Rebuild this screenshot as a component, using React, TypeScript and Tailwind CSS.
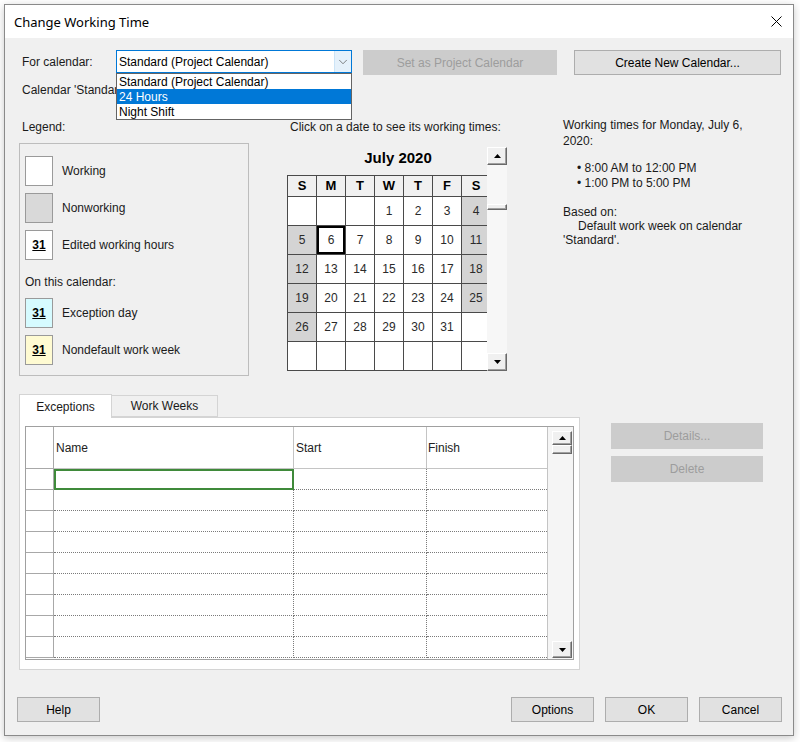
import { ChevronDown } from "lucide-react";

const weeks: string[][] = [
  ["", "", "", "1", "2", "3", "4"],
  ["5", "6", "7", "8", "9", "10", "11"],
  ["12", "13", "14", "15", "16", "17", "18"],
  ["19", "20", "21", "22", "23", "24", "25"],
  ["26", "27", "28", "29", "30", "31", ""],
  ["", "", "", "", "", "", ""],
];

const dayNames = ["S", "M", "T", "W", "T", "F", "S"];

function Arrow({ up }: { up?: boolean }) {
  return (
    <svg width="7" height="4" viewBox="0 0 7 4">
      <path d={up ? "M0 4L3.5 0L7 4Z" : "M0 0L3.5 4L7 0Z"} fill="#000" />
    </svg>
  );
}

function ScrollBtn({ up, className = "" }: { up?: boolean; className?: string }) {
  return (
    <div
      className={`flex items-center justify-center bg-[#f0f0f0] border border-t-white border-l-white border-r-[#696969] border-b-[#696969] shadow-[inset_-1px_-1px_0_#a0a0a0] ${className}`}
    >
      <Arrow up={up} />
    </div>
  );
}

function Thumb({ className = "" }: { className?: string }) {
  return (
    <div
      className={`bg-[#f0f0f0] border border-t-white border-l-white border-r-[#696969] border-b-[#696969] shadow-[inset_-1px_-1px_0_#a0a0a0] ${className}`}
    />
  );
}

function Button({
  children,
  className = "",
  disabled = false,
}: {
  children: React.ReactNode;
  className?: string;
  disabled?: boolean;
}) {
  return (
    <button
      type="button"
      className={`flex items-center justify-center border ${
        disabled
          ? "bg-[#cccccc] border-[#cccccc] text-[#9d9d9d]"
          : "bg-[#e1e1e1] border-[#adadad] text-black"
      } ${className}`}
    >
      {children}
    </button>
  );
}

function LegendItem({ bg, mark, label }: { bg: string; mark?: boolean; label: string }) {
  return (
    <div className="flex items-center">
      <div className={`w-[28px] h-[30px] border border-[#9a9a9a] flex items-center justify-center ${bg}`}>
        {mark && <span className="font-bold underline text-[12px] text-black">31</span>}
      </div>
      <span className="ml-[9px] text-[#1a1a1a]">{label}</span>
    </div>
  );
}

function Calendar() {
  return (
    <div className="flex">
      <div className="w-[200px]">
        <div className="h-[28px] pl-[22px] pt-[2px] text-center font-bold text-[15px] leading-[18px]">
          July 2020
        </div>
        <div className="w-[200px] overflow-hidden">
          <div className="w-[204px] border-t border-l border-[#4a4a4a]">
            <div className="flex">
              {dayNames.map((d, i) => (
                <div
                  key={i}
                  className="w-[29px] h-[21px] shrink-0 border-r border-b border-[#4a4a4a] bg-[#f0f0f0] flex items-center justify-center font-bold text-[13px]"
                >
                  {d}
                </div>
              ))}
            </div>
            {weeks.map((week, r) => (
              <div key={r} className="flex">
                {week.map((d, c) => {
                  const off = d !== "" && (c === 0 || c === 6);
                  const sel = d === "6";
                  return (
                    <div
                      key={c}
                      className={`w-[29px] h-[29px] shrink-0 border-r border-b border-[#4a4a4a] flex items-center justify-center text-[#2a2a2a] ${
                        off ? "bg-[#d4d4d4]" : "bg-white"
                      } ${sel ? "shadow-[inset_0_0_0_2px_#000]" : ""}`}
                    >
                      {d}
                    </div>
                  );
                })}
              </div>
            ))}
          </div>
        </div>
      </div>
      <div className="w-[20px] h-[224px] flex flex-col bg-[#f7f7f7]">
        <ScrollBtn up className="h-[18px]" />
        <div className="h-[39px]" />
        <Thumb className="h-[6px]" />
        <div className="flex-1" />
        <ScrollBtn className="h-[18px]" />
      </div>
    </div>
  );
}

function ExceptionsTable() {
  const rows = Array.from({ length: 9 });
  return (
    <div className="w-[549px] h-[234px] border border-[#a0a0a0] flex bg-white">
      <div className="w-[521px] flex flex-col">
        <div className="flex h-[42px] shrink-0">
          <div className="w-[28px] border-r border-b border-[#a8a8a8]" />
          <div className="w-[240px] border-r border-b border-[#c4c4c4] flex items-center pl-[2px] text-[#222]">
            Name
          </div>
          <div className="w-[133px] border-r border-b border-[#c4c4c4] flex items-center pl-[2px] text-[#222]">
            Start
          </div>
          <div className="w-[120px] border-b border-[#c4c4c4] flex items-center pl-[1px] text-[#222]">
            Finish
          </div>
        </div>
        {rows.map((_, i) => (
          <div key={i} className="flex h-[21px] shrink-0">
            <div className="w-[28px] border-r border-b border-[#a8a8a8]" />
            {i === 0 ? (
              <div className="w-[240px] border-2 border-[#3f8a3a]" />
            ) : (
              <div className="w-[240px] border-r border-b border-dotted border-[#7a7a7a]" />
            )}
            <div className="w-[133px] border-r border-b border-dotted border-[#7a7a7a]" />
            <div className="w-[120px] border-b border-dotted border-[#7a7a7a]" />
          </div>
        ))}
      </div>
      <div className="w-[26px] border-l border-[#c4c4c4] bg-[#f5f5f5] flex flex-col pt-[4px] pl-[4px] pb-[1px]">
        <ScrollBtn up className="w-[20px] h-[14px]" />
        <Thumb className="w-[20px] h-[9px]" />
        <div className="flex-1" />
        <ScrollBtn className="w-[20px] h-[17px]" />
      </div>
    </div>
  );
}

export default function App() {
  return (
    <div className="w-[800px] h-[742px] bg-white pt-[4px] pl-[4px] font-['Liberation_Sans',Arial,sans-serif] text-[12px] leading-[14px] text-black">
      <div className="w-[790px] h-[732px] border border-[#8a8a8a] flex flex-col shadow-[0_2px_8px_rgba(0,0,0,0.22)]">
        {/* Title bar */}
        <div className="h-[33px] shrink-0 bg-white flex items-center justify-between">
          <span className="pl-[9px] font-['Noto_Sans',sans-serif] text-[13px]">Change Working Time</span>
          <div className="w-[34px] h-full flex items-center justify-center">
            <svg width="11" height="11" viewBox="0 0 11 11">
              <path d="M0.5 0.5L10.5 10.5M10.5 0.5L0.5 10.5" stroke="#000" strokeWidth="1" />
            </svg>
          </div>
        </div>

        {/* Body */}
        <div className="flex-1 bg-[#f0f0f0] pl-[14px] pr-[11px] flex flex-col">
          <div className="mt-[12px] h-[25px] flex items-start">
            <div className="w-[97px] pl-[3px] h-[23px] flex items-center text-[#1a1a1a]">For calendar:</div>
            <div className="relative w-[236px] h-[23px] border border-[#0078d7] bg-white flex z-20">
              <div className="flex-1 pl-[2px] flex items-center">Standard (Project Calendar)</div>
              <div className="w-[17px] bg-[#e5f1fb] border-l border-[#cce4f7] flex items-center justify-center">
                <ChevronDown size={14} strokeWidth={1.25} color="#555" />
              </div>
              <div className="absolute left-[-1px] top-[22px] w-[236px] border border-[#646464] bg-white">
                <div className="h-[15px] pl-[2px] flex items-center">Standard (Project Calendar)</div>
                <div className="h-[15px] pl-[2px] flex items-center bg-[#0078d7] text-white">24 Hours</div>
                <div className="h-[15px] pl-[2px] flex items-center">Night Shift</div>
              </div>
            </div>
            <Button disabled className="ml-[11px] w-[194px] h-[25px]">
              Set as Project Calendar
            </Button>
            <Button className="ml-[17px] w-[207px] h-[25px]">Create New Calendar...</Button>
          </div>

          {/* label runs under the open list, so only its visible part is kept */}
          <div className="mt-[8px] h-[14px] w-[97px] pl-[3px] overflow-hidden whitespace-nowrap text-[#1a1a1a]">
            Calendar 'Standard' is a base calendar.
          </div>

          {/* Legend / calendar / working times */}
          <div className="mt-[23px] flex items-start">
            <div className="w-[230px]">
              <div className="h-[14px] pl-[3px] text-[#1a1a1a]">Legend:</div>
              <div className="mt-[9px] h-[233px] border border-[#bdbdbd] pl-[5px] pt-[12px]">
                <div className="flex flex-col gap-[7px]">
                  <LegendItem bg="bg-white" label="Working" />
                  <LegendItem bg="bg-[#d9d9d9]" label="Nonworking" />
                  <LegendItem bg="bg-white" mark label="Edited working hours" />
                </div>
                <div className="mt-[15px] h-[14px] text-[#1a1a1a]">On this calendar:</div>
                <div className="mt-[9px] flex flex-col gap-[7px]">
                  <LegendItem bg="bg-[#d6fbff]" mark label="Exception day" />
                  <LegendItem bg="bg-[#fffbd2]" mark label="Nondefault work week" />
                </div>
              </div>
            </div>

            <div className="ml-[38px] w-[220px]">
              <div className="h-[14px] pl-[3px] whitespace-nowrap text-[#1a1a1a]">
                Click on a date to see its working times:
              </div>
              <div className="mt-[13px]">
                <Calendar />
              </div>
            </div>

            <div className="ml-[56px] mt-[-3px] w-[210px] text-[#1a1a1a] leading-[16px]">
              <div>Working times for Monday, July 6,</div>
              <div>2020:</div>
              <div className="mt-[12px] pl-[14px] leading-[15px]">• 8:00 AM to 12:00 PM</div>
              <div className="pl-[14px] leading-[15px]">• 1:00 PM to 5:00 PM</div>
              <div className="mt-[14px] leading-[14px]">Based on:</div>
              <div className="pl-[15px] leading-[14px]">Default work week on calendar</div>
              <div className="leading-[14px]">'Standard'.</div>
            </div>
          </div>

          {/* Tabs */}
          <div className="mt-[18px] flex items-start">
            <div>
              <div className="flex items-end h-[23px]">
                <div className="relative z-10 w-[93px] h-[24px] mb-[-1px] bg-white border border-b-0 border-[#d4d4d4] flex items-center justify-center text-[#1a1a1a]">
                  Exceptions
                </div>
                <div className="w-[106px] h-[22px] bg-[#f0f0f0] border border-l-0 border-[#d4d4d4] flex items-center justify-center text-[#1a1a1a]">
                  Work Weeks
                </div>
              </div>
              <div className="w-[561px] h-[253px] border border-[#d4d4d4] bg-white pl-[5px] pt-[8px]">
                <ExceptionsTable />
              </div>
            </div>
            <div className="ml-[31px] mt-[29px] flex flex-col gap-[7px]">
              <Button disabled className="w-[152px] h-[26px]">
                Details...
              </Button>
              <Button disabled className="w-[152px] h-[26px]">
                Delete
              </Button>
            </div>
          </div>

          {/* Bottom buttons */}
          <div className="mt-[27px] flex items-center">
            <Button className="ml-[-2px] w-[83px] h-[25px]">Help</Button>
            <div className="flex-1" />
            <Button className="w-[83px] h-[25px]">Options</Button>
            <Button className="ml-[11px] w-[83px] h-[25px]">OK</Button>
            <Button className="ml-[11px] w-[83px] h-[25px]">Cancel</Button>
          </div>
        </div>
      </div>
    </div>
  );
}
